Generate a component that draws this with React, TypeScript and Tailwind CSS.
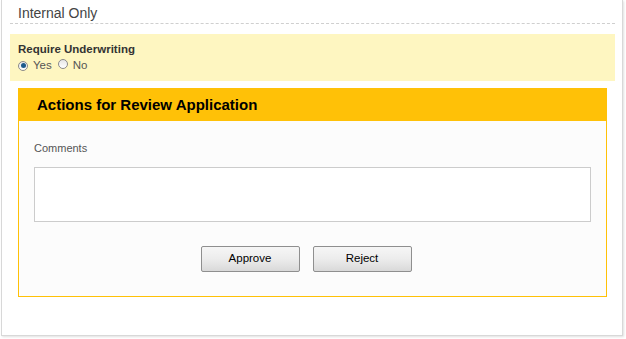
import React from "react";

function Radio({ checked }: { checked?: boolean }) {
  return (
    <span className="inline-flex items-center justify-center w-[10px] h-[10px] rounded-full border border-[#8a8a8a] bg-gradient-to-b from-[#e6e6e6] to-[#ffffff]">
      {checked ? <span className="w-[5px] h-[5px] rounded-full bg-[#1d5a8c]" /> : null}
    </span>
  );
}

function Btn({ label }: { label: string }) {
  return (
    <button className="w-[99px] h-[26px] rounded-[2px] border border-[#8f8f8f] bg-gradient-to-b from-[#f6f6f6] via-[#ececec] to-[#d9d9d9] text-[11.5px] text-black leading-none">
      {label}
    </button>
  );
}

export default function App() {
  return (
    <div className="w-[626px] h-[339px] bg-white overflow-hidden" style={{ fontFamily: '"Liberation Sans", Arial, sans-serif' }}>
      <div className="ml-[1px] w-[622px] h-[336px] bg-white border-l border-r border-b border-[#d8d8d8] shadow-[1px_1px_2px_rgba(0,0,0,0.12)] pl-[8px] pr-[7px]">
        <div className="h-[24px] border-b border-dashed border-[#cfcfcf] pl-[8px] pt-[5px] text-[14px] leading-[16px] text-[#444]">
          Internal Only
        </div>
        <div className="mt-[10px] h-[47px] bg-[#fef6c1] pl-[8px] pt-[9px]">
          <div className="text-[11.5px] leading-[13px] font-bold text-[#333]">Require Underwriting</div>
          <div className="mt-[3px] flex items-center text-[11.5px] leading-[13px] text-[#555]">
            <Radio checked />
            <span className="ml-[5px]">Yes</span>
            <span className="ml-[6px]"><Radio /></span>
            <span className="ml-[5px]">No</span>
          </div>
        </div>
        <div className="mt-[7px] mx-[8px] h-[209px] border border-[#ffc107] bg-[#fcfcfc] flex flex-col">
          <div className="h-[32px] bg-[#ffc107] pl-[18px] flex items-center text-[15px] font-bold text-black">
            Actions for Review Application
          </div>
          <div className="px-[15px]">
            <div className="mt-[21px] text-[11px] leading-[13px] text-[#555]">Comments</div>
            <div className="mt-[12px] h-[55px] border border-[#cccccc] bg-white" />
            <div className="mt-[24px] flex justify-center gap-[13px] pr-[13px]">
              <Btn label="Approve" />
              <Btn label="Reject" />
            </div>
          </div>
        </div>
      </div>
    </div>
  );
}
